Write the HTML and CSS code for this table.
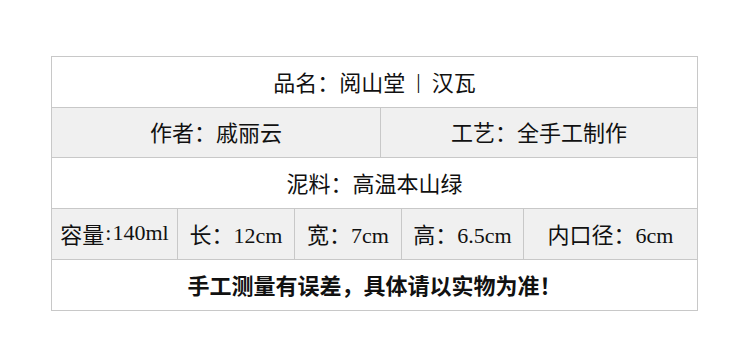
FILE: index.html
```html
<!DOCTYPE html>
<html lang="zh">
<head>
<meta charset="utf-8">
<title>阅山堂 汉瓦</title>
<link rel="stylesheet" href="styles.css">
</head>
<body>
<div class="page">
  <div class="spec">
    <div class="row one white"><div class="cell">品名：阅山堂<span class="sep">|</span>汉瓦</div></div>
    <div class="row two gray"><div class="cell">作者：戚丽云</div><div class="cell">工艺：全手工制作</div></div>
    <div class="row one white"><div class="cell">泥料：高温本山绿</div></div>
    <div class="row five gray"><div class="cell">容量<span class="colon">:</span>140ml</div><div class="cell">长：12cm</div><div class="cell">宽：7cm</div><div class="cell">高：6.5cm</div><div class="cell">内口径：6cm</div></div>
    <div class="row one white"><div class="cell bold">手工测量有误差，具体请以实物为准！</div></div>
  </div>
</div>
</body>
</html>
```
FILE: styles.css
```css
html, body { margin: 0; padding: 0; background: #fff; }
.page { padding: 56px 0 0 51px; }
.spec {
  width: 645px;
  border: 1px solid #c8c8c8;
  font-family: "Liberation Serif", "Noto Sans CJK SC", serif;
  font-size: 22px;
  color: #111;
}
.row { display: grid; height: 50px; }
.row + .row { border-top: 1px solid #c8c8c8; }
.row.one { grid-template-columns: 1fr; }
.row.two { grid-template-columns: 328px 1fr; height: 49px; }
.row.five { grid-template-columns: 125px 117px 107px 122px 1fr; }
.gray { background: #f0f0f0; }
.white { background: #fff; }
.cell {
  display: flex;
  align-items: center;
  justify-content: center;
  white-space: nowrap;
  padding-bottom: 3px;
  box-sizing: border-box;
}
.cell + .cell { border-left: 1px solid #c8c8c8; }
.sep { padding: 0 11px; }
.colon { padding: 0 1px; }
.bold { font-weight: bold; }
```
